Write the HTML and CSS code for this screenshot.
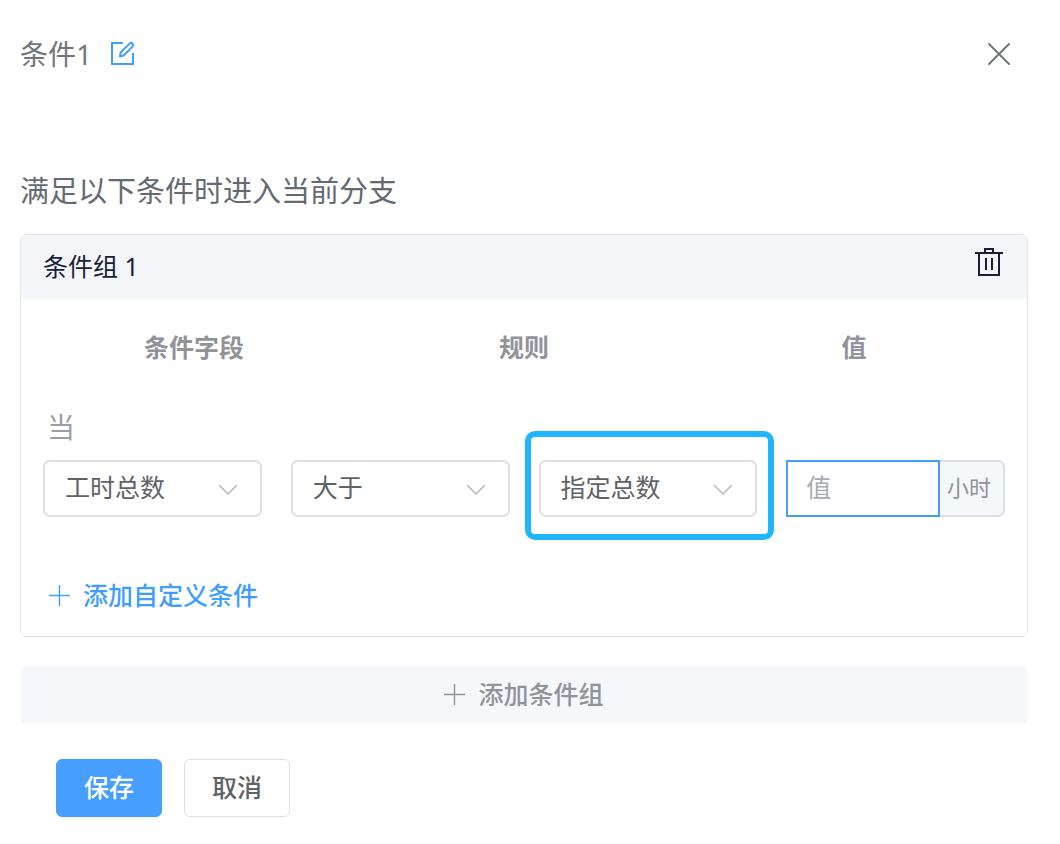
FILE: index.html
```html
<!DOCTYPE html>
<html lang="zh-CN">
<head>
    <meta charset="UTF-8">
    <meta name="viewport" content="width=device-width, initial-scale=1.0">
    <title>条件1</title>
    <link rel="stylesheet" href="styles.css">
</head>
<body>
    <form class="drawer" onsubmit="return false">
        <header class="drawer-header">
            <h1>条件1</h1>
            <button type="button" class="icon-btn edit-btn" aria-label="编辑">
                <svg width="26" height="26" viewBox="0 0 26 26" fill="none" stroke="currentColor" stroke-width="2">
                    <path d="M13 2H2v21h21V12"/>
                    <path d="M10 15.500l.6-4 8.900-8.900a2.100 2.100 0 0 1 3 3l-8.900 8.900z" stroke-linejoin="round"/>
                </svg>
            </button>
            <button type="button" class="icon-btn close-btn" aria-label="关闭">
                <svg width="24" height="24" viewBox="0 0 24 24" fill="none" stroke="currentColor" stroke-width="2" stroke-linecap="round">
                    <path d="M2 2l20 20M22 2L2 22"/>
                </svg>
            </button>
        </header>

        <p class="tip">满足以下条件时进入当前分支</p>

        <!-- Condition group -->
        <section class="group">
            <div class="group-header">
                <h2>条件组 1</h2>
                <button type="button" class="icon-btn delete-btn" aria-label="删除">
                    <svg width="28" height="28" viewBox="0 0 28 28" fill="none" stroke="currentColor" stroke-width="2">
                        <path d="M0 5h28M10 5V1h8v4M4 5v22h20V5M11 10v12M17 10v12"/>
                    </svg>
                </button>
            </div>

            <div class="columns">
                <span>条件字段</span>
                <span>规则</span>
                <span>值</span>
            </div>

            <div class="when">当</div>

            <div class="rule">
                <div class="select">
                    <select aria-label="条件字段">
                        <option>工时总数</option>
                    </select>
                    <svg class="arrow" viewBox="0 0 20 11"><path d="M1 1l9 9 9-9"/></svg>
                </div>
                <div class="select">
                    <select aria-label="规则">
                        <option>大于</option>
                    </select>
                    <svg class="arrow" viewBox="0 0 20 11"><path d="M1 1l9 9 9-9"/></svg>
                </div>
                <div class="select highlight">
                    <select aria-label="值类型">
                        <option>指定总数</option>
                    </select>
                    <svg class="arrow" viewBox="0 0 20 11"><path d="M1 1l9 9 9-9"/></svg>
                </div>
                <div class="value">
                    <input type="text" id="value" placeholder="值">
                    <label for="value">小时</label>
                </div>
            </div>

            <button type="button" class="text-btn">
                <svg class="plus" viewBox="0 0 21 21"><path d="M10.500 0v21M0 10.500h21"/></svg>
                <span>添加自定义条件</span>
            </button>
        </section>

        <button type="button" class="add-group">
            <svg class="plus" viewBox="0 0 21 21"><path d="M10.500 0v21M0 10.500h21"/></svg>
            <span>添加条件组</span>
        </button>

        <footer class="actions">
            <button type="submit" class="btn primary">保存</button>
            <button type="button" class="btn">取消</button>
        </footer>
    </form>
</body>
</html>
```

FILE: styles.css
```css
* {
    box-sizing: border-box;
}
body {
    margin: 0;
    background: #fff;
    color: #606266;
}
body, button, input, select {
    font-family: "Noto Sans", "Noto Sans CJK SC", sans-serif;
    font-size: 25px;
    line-height: 36px;
}
h1, h2, p {
    margin: 0;
    font-weight: 400;
}
button {
    border: none;
    padding: 0;
    background: none;
    cursor: pointer;
}
svg {
    display: block;
}
.drawer {
    padding: 32px 32px 24px 20px;
}
.drawer-header {
    display: flex;
    align-items: center;
    height: 44px;
    color: #72767b;
}
h1 {
    font-size: 28px;
}
.icon-btn {
    color: inherit;
}
.edit-btn {
    margin-left: 18px;
    color: #409eff;
}
.close-btn {
    margin-left: auto;
    margin-right: 17px;
}
.tip {
    margin-top: 97px;
    font-size: 29px;
    color: #646a73;
}

/* Group card */
.group {
    margin-top: 25px;
    border: 1px solid #e4e5e7;
    border-radius: 6px;
    overflow: hidden;
}
.group-header {
    display: flex;
    justify-content: space-between;
    height: 64px;
    padding: 13px 24px 0 22px;
    background: #f4f5f8;
    color: #171e37;
}
h2 {
    font-size: 25px;
}
.delete-btn {
    align-self: flex-start;
}
.columns {
    display: grid;
    grid-template-columns: repeat(3, 1fr);
    padding: 30px 8px 0;
    text-align: center;
    font-weight: 700;
    color: #909399;
}
.when {
    margin: 44px 0 15px 26px;
    font-size: 28px;
    color: #9a9fa7;
}
.rule {
    display: grid;
    grid-template-columns: repeat(4, minmax(0, 1fr));
    gap: 29px;
    padding: 0 22px;
}
.select {
    position: relative;
}
select {
    display: block;
    width: 100%;
    height: 57px;
    padding: 0 20px 4px;
    border: 2px solid #dcdfe6;
    border-radius: 7px;
    background: #fff;
    color: #606266;
    appearance: none;
}
.arrow {
    position: absolute;
    right: 24px;
    top: 24px;
    width: 20px;
    height: 11px;
    fill: none;
    stroke: #b4b8bf;
    stroke-width: 1.5;
    pointer-events: none;
}
.highlight::after {
    content: "";
    position: absolute;
    inset: -29px -17px -23px -14px;
    border: 6px solid #1fb6ff;
    border-radius: 10px;
    pointer-events: none;
}
.value {
    display: flex;
    height: 57px;
}
.value input {
    flex: 1;
    min-width: 0;
    padding: 0 18px 4px;
    border: 2px solid #409eff;
    outline: none;
    color: #606266;
}
.value input::placeholder {
    color: #a8abb2;
}
.value label {
    padding: 7px 12px 0 7px;
    border: 2px solid #dcdfe6;
    border-left: none;
    border-radius: 0 7px 7px 0;
    background: #f5f7fa;
    font-size: 22px;
    color: #909399;
}
.plus {
    width: 21px;
    height: 21px;
    fill: none;
    stroke: currentColor;
    stroke-width: 1.4;
}
.text-btn {
    display: flex;
    align-items: center;
    gap: 13px;
    margin: 60px 0 23px 28px;
    font-weight: 500;
    color: #409eff;
}
.add-group {
    display: flex;
    align-items: center;
    justify-content: center;
    gap: 13px;
    width: 100%;
    height: 57px;
    margin-top: 29px;
    border-radius: 6px;
    background: #f5f7fb;
    font-weight: 500;
    color: #909399;
}
.add-group span {
    padding-bottom: 2px;
}
.actions {
    display: flex;
    gap: 22px;
    margin-top: 36px;
    padding-left: 36px;
}
.btn {
    height: 58px;
    padding: 0 27px 3px;
    border: 1px solid #dcdfe6;
    border-radius: 6px;
    background: #fff;
    font-weight: 500;
    color: #606266;
}
.primary {
    border-color: #469fff;
    background: #469fff;
    color: #fff;
}
```
